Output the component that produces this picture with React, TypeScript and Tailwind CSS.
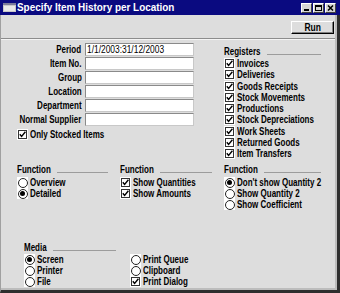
import React from "react";

const FONT = "font-['Liberation_Sans',Arial,sans-serif]";

// the reference uses a narrow bitmap font; squeeze Liberation Sans to match
function T({ children, right = false }: { children: React.ReactNode; right?: boolean }) {
  return (
    <span className={`inline-block whitespace-nowrap scale-x-[0.8] ${right ? "origin-right" : "origin-left"}`}>
      {children}
    </span>
  );
}

function Box({ checked }: { checked: boolean }) {
  return (
    <span className="w-[11px] h-[11px] bg-white flex items-center justify-center shrink-0">
      <span className="w-[9px] h-[9px] border border-[#333] flex items-center justify-center">
        {checked && (
          <svg width="7" height="7" viewBox="0 0 7 7">
            <path d="M0.8 3.2 L2.6 5.4 L6.4 0.8" stroke="#000" strokeWidth="1.4" fill="none" />
          </svg>
        )}
      </span>
    </span>
  );
}

function Dot({ on }: { on: boolean }) {
  return (
    <span className="w-[11px] h-[11px] bg-white flex items-center justify-center shrink-0">
      <span className="w-[10px] h-[10px] rounded-full border border-[#222] bg-white flex items-center justify-center">
        {on && <span className="w-[5px] h-[5px] rounded-full bg-black" />}
      </span>
    </span>
  );
}

function Check({ label, checked = true, h = "h-[11px]" }: { label: string; checked?: boolean; h?: string }) {
  return (
    <div className={`flex items-center gap-[2px] ${h}`}>
      <Box checked={checked} />
      <T>{label}</T>
    </div>
  );
}

function Radio({ label, on = false }: { label: string; on?: boolean }) {
  return (
    <div className="flex items-center gap-[2px] h-[11px]">
      <Dot on={on} />
      <T>{label}</T>
    </div>
  );
}

function Head({ title, gap }: { title: string; gap: string }) {
  return (
    <div className="flex items-center h-[11px]">
      <T>{title}</T>
      <span className={`flex-1 ${gap} h-[1px] bg-[#9c9c9c] mt-[5px]`} />
    </div>
  );
}

function Field({ label, value = "" }: { label: string; value?: string }) {
  return (
    <div className="flex items-center h-[13px]">
      <span className="w-[81px] text-right">
        <T right>{label}</T>
      </span>
      <span className="ml-[3px] w-[110px] h-[13px] bg-white border-t border-l border-[#8a8a8a] border-r border-b border-r-[#c8c8c8] border-b-[#c8c8c8] font-normal pl-[1px] leading-[11px] overflow-hidden">
        <span className="inline-block whitespace-nowrap origin-left scale-x-[0.84]">{value}</span>
      </span>
    </div>
  );
}

export default function App() {
  return (
    <div className={`w-[340px] h-[293px] flex flex-col bg-[#dddddd] text-black text-[10px] leading-[11px] font-bold ${FONT}`}>
      {/* Title bar */}
      <div className="h-[15px] bg-[#0a0a80] flex items-center pl-[3px] pr-[4px]">
        <svg width="13" height="9" viewBox="0 0 13 9" className="shrink-0">
          <rect x="0" y="0" width="13" height="9" fill="#c8c8c8" />
          <rect x="0" y="0" width="13" height="2" fill="#7a7a9a" />
          <rect x="1" y="3" width="11" height="5" fill="#e8e8e8" />
        </svg>
        <span className="ml-[1px] w-[200px] text-white text-[11px] leading-[13px]">
          <span className="inline-block whitespace-nowrap origin-left scale-x-[0.9]">Specify Item History per Location</span>
        </span>
        <div className="ml-auto flex">
          <span className="w-[11px] h-[10px] bg-[#d4d4d4] border border-t-white border-l-white border-r-[#404040] border-b-[#404040] flex items-end justify-center pb-[1px]">
            <span className="w-[5px] h-[2px] bg-black" />
          </span>
          <span className="ml-[1px] w-[11px] h-[10px] bg-[#d4d4d4] border border-t-white border-l-white border-r-[#404040] border-b-[#404040] flex items-center justify-center">
            <span className="w-[7px] h-[6px] border border-black border-t-2" />
          </span>
          <span className="ml-[1px] w-[11px] h-[10px] bg-[#d4d4d4] border border-t-white border-l-white border-r-[#404040] border-b-[#404040] flex items-center justify-center">
            <svg width="7" height="6" viewBox="0 0 7 6">
              <path d="M1 0.5 L6 5.5 M6 0.5 L1 5.5" stroke="#000" strokeWidth="1.5" />
            </svg>
          </span>
        </div>
      </div>

      <div className="flex-1 flex flex-col border-l border-l-[#a0a0a0] border-r-[3px] border-b-[3px] border-r-[#2e2e2e] border-b-[#2e2e2e]">
        <div className="flex-1 flex flex-col border-r-2 border-b-2 border-r-[#bcbcbc] border-b-[#bcbcbc]">
          {/* Toolbar */}
          <div className="h-[23px] flex items-start justify-end pt-[6px] pr-[1px]">
            <button className="w-[43px] h-[13px] bg-[#dddddd] border border-t-white border-l-white border-r-black border-b-black shadow-[inset_-1px_-1px_0_#808080] text-[10px] leading-[10px] font-bold">
              <span className="inline-block scale-x-[0.85]">Run</span>
            </button>
          </div>
          <div className="h-[2px] border-t border-t-[#8c8c8c] border-b border-b-[#f4f4f4]" />

          {/* Body */}
          <div className="flex flex-col pt-[1px]">
            <div className="flex">
              <div className="w-[193px] flex flex-col pt-[2px] gap-[1px]">
                <Field label="Period" value="1/1/2003:31/12/2003" />
                <Field label="Item No." />
                <Field label="Group" />
                <Field label="Location" />
                <Field label="Department" />
                <Field label="Normal Supplier" />
                <div className="pl-[16px] mt-[2px]">
                  <Check label="Only Stocked Items" />
                </div>
              </div>
              <div className="ml-[30px] w-[97px] flex flex-col pt-[5px]">
                <Head title="Registers" gap="-ml-[3px]" />
                <div className="mt-[1px] flex flex-col">
                  <Check label="Invoices" h="h-[11.25px]" />
                  <Check label="Deliveries" h="h-[11.25px]" />
                  <Check label="Goods Receipts" h="h-[11.25px]" />
                  <Check label="Stock Movements" h="h-[11.25px]" />
                  <Check label="Productions" h="h-[11.25px]" />
                  <Check label="Stock Depreciations" h="h-[11.25px]" />
                  <Check label="Work Sheets" h="h-[11.25px]" />
                  <Check label="Returned Goods" h="h-[11.25px]" />
                  <Check label="Item Transfers" h="h-[11.25px]" />
                </div>
              </div>
            </div>

            <div className="flex mt-[5px] pl-[16px]">
              <div className="w-[91px] flex flex-col">
                <Head title="Function" gap="-ml-[2px]" />
                <div className="mt-[2px] flex flex-col">
                  <Radio label="Overview" />
                  <Radio label="Detailed" on />
                </div>
              </div>
              <div className="ml-[12px] w-[92px] flex flex-col">
                <Head title="Function" gap="-ml-[2px]" />
                <div className="mt-[2px] flex flex-col">
                  <Check label="Show Quantities" />
                  <Check label="Show Amounts" />
                </div>
              </div>
              <div className="ml-[12px] w-[97px] flex flex-col">
                <Head title="Function" gap="-ml-[2px]" />
                <div className="mt-[2px] flex flex-col">
                  <Radio label="Don't show Quantity 2" on />
                  <Radio label="Show Quantity 2" />
                  <Radio label="Show Coefficient" />
                </div>
              </div>
            </div>

            <div className="flex mt-[32px] pl-[23px]">
              <div className="w-[92px] flex flex-col">
                <Head title="Media" gap="ml-[1px]" />
                <div className="mt-[1px] flex flex-col">
                  <Radio label="Screen" on />
                  <Radio label="Printer" />
                  <Radio label="File" />
                </div>
              </div>
              <div className="ml-[14px] pt-[12px] flex flex-col">
                <Radio label="Print Queue" />
                <Radio label="Clipboard" />
                <Check label="Print Dialog" />
              </div>
            </div>
          </div>
        </div>
      </div>
    </div>
  );
}
